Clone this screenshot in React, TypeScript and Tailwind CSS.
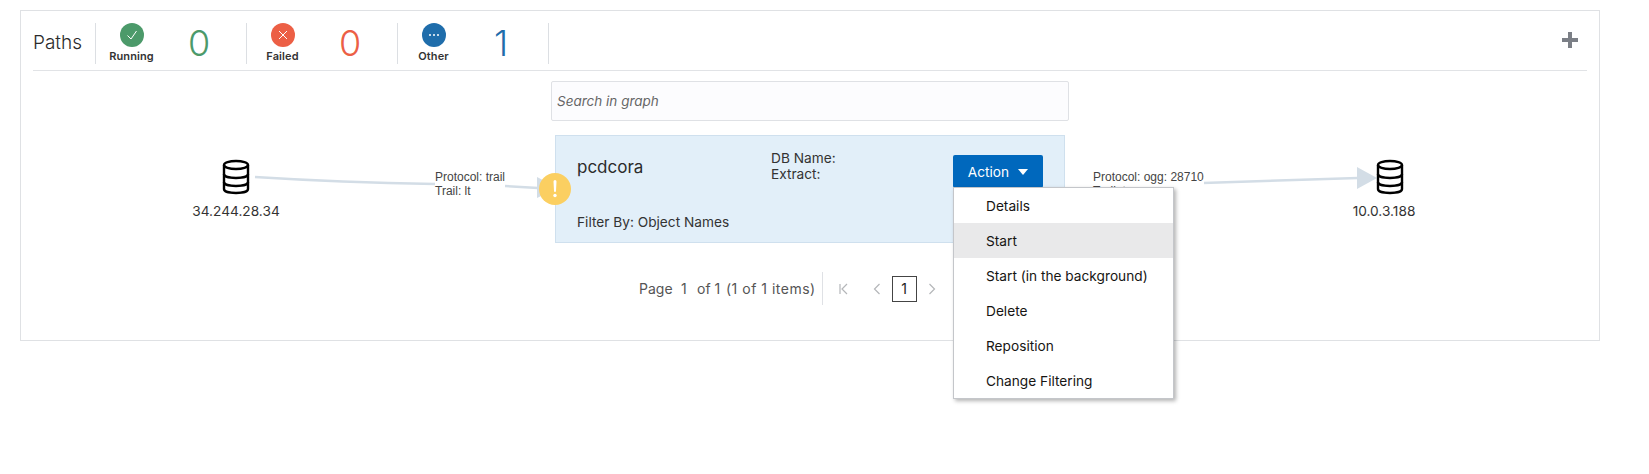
import React from "react";

const inter = "font-['Inter','Liberation_Sans',sans-serif]";

function DbIcon() {
  return (
    <svg width="28" height="36" viewBox="0 0 28 36" fill="none" stroke="#000" strokeWidth="2.4">
      <ellipse cx="14" cy="6" rx="12" ry="4" />
      <path d="M2 6v24c0 2.4 5.4 4 12 4s12-1.6 12-4V6" />
      <path d="M2 15c0 2.4 5.4 4 12 4s12-1.6 12-4" />
      <path d="M2 23c0 2.4 5.4 4 12 4s12-1.6 12-4" />
    </svg>
  );
}

function Stat({ label, value, bg, text, children }: { label: string; value: string; bg: string; text: string; children: React.ReactNode }) {
  return (
    <div className="flex w-[151px] h-[41px] border-r border-[#dcdfe3] items-start">
      <div className="w-[71px] flex flex-col items-center">
        <div className={`w-6 h-6 rounded-full flex items-center justify-center ${bg}`}>{children}</div>
        <div className="text-[11px] leading-[14px] mt-[2px] font-semibold text-[#333] tracking-[0.1px]">{label}</div>
      </div>
      <div className={`w-[64px] text-center text-[36px] leading-[40px] font-light ${text}`}>{value}</div>
    </div>
  );
}

const items = ["Details", "Start", "Start (in the background)", "Delete", "Reposition", "Change Filtering"];

export default function App() {
  return (
    <div className={`min-h-screen bg-white pt-[10px] pl-[20px] ${inter} text-[#333]`}>
      <div className="w-[1580px] h-[331px] border border-[#dfe1e4] px-[12px]">
        <header className="h-[60px] border-b border-[#e1e3e6] flex items-start pt-[12px]">
          <div className="w-[64px] h-[41px] border-r border-[#dcdfe3] flex items-center text-[19px] font-light text-[#2b2b2b] -ml-px pl-px">Paths</div>
          <Stat label="Running" value="0" bg="bg-[#4c9a6a]" text="text-[#4c9a6a]">
            <svg width="14" height="14" viewBox="0 0 14 14" fill="none" stroke="#fff" strokeWidth="1"><path d="M2.5 7.5 6 11l5.5-8" /></svg>
          </Stat>
          <Stat label="Failed" value="0" bg="bg-[#ec5f45]" text="text-[#ec5f45]">
            <svg width="12" height="12" viewBox="0 0 12 12" fill="none" stroke="#fff" strokeWidth="1"><path d="m2 2 8 8M10 2l-8 8" /></svg>
          </Stat>
          <Stat label="Other" value="1" bg="bg-[#1f6dab]" text="text-[#1f6dab]">
            <svg width="14" height="4" viewBox="0 0 14 4" fill="#fff"><circle cx="3" cy="2" r="1" /><circle cx="7" cy="2" r="1" /><circle cx="11" cy="2" r="1" /></svg>
          </Stat>
          <div className="ml-auto mr-[9px] mt-[9px]">
            <svg width="16" height="16" viewBox="0 0 16 16" fill="#7b7f86"><path d="M6 0h4v6h6v4h-6v6H6v-6H0V6h6z" /></svg>
          </div>
        </header>

        <div className="relative h-[269px]">
          <svg className="absolute left-0 top-0" width="1554" height="269" fill="none">
            <path d="M222 106 C 300 111 340 112 402 113" stroke="#d3dde6" strokeWidth="2.5" />
            <path d="M472 115 L 505 117" stroke="#d3dde6" strokeWidth="2.5" />
            <path d="M504 106 L 525 117 L 504 127 Z" fill="#d3dde6" />
            <path d="M1170 112 C 1230 110 1280 108 1325 107" stroke="#d3dde6" strokeWidth="2.5" />
            <path d="M1324 96 L 1344 107 L 1324 118 Z" fill="#d3dde6" />
          </svg>

          <div className="absolute left-[163px] top-[88px] w-[80px] flex flex-col items-center">
            <DbIcon />
            <div className="text-[13.7px] leading-[20px] mt-[6px] whitespace-nowrap">34.244.28.34</div>
          </div>
          <div className="absolute left-[1317px] top-[88px] w-[80px] flex flex-col items-center">
            <DbIcon />
            <div className="text-[13.7px] leading-[20px] mt-[6px] whitespace-nowrap -ml-[12px]">10.0.3.188</div>
          </div>

          <div className="absolute left-[402px] top-[99px] text-[12px] leading-[14px] font-['Liberation_Sans',sans-serif] text-[#444] bg-white">
            <div>Protocol: trail</div>
            <div>Trail: lt</div>
          </div>
          <div className="absolute left-[1060px] top-[99px] text-[12px] leading-[14px] font-['Liberation_Sans',sans-serif] text-[#444] bg-white">
            <div>Protocol: ogg: 28710</div>
            <div>Trail: t</div>
          </div>

          <div className="relative ml-[518px] pt-[10px] w-[518px]">
            <div className="h-[40px] border border-[#dfe1e5] rounded-[2px] bg-[#fcfcfe] flex items-center px-[5px] text-[13.5px] italic text-[#666]">
              Search in graph
            </div>
            <div className="relative mt-[14px] ml-[4px] w-[510px] h-[108px] bg-[#e2eff9] border border-[#cfe0ee] px-[21px] pt-[14px] pb-[11px] flex flex-col justify-between">
              <div className="flex items-start">
                <div className="w-[194px] text-[17px] leading-[32px] mt-[1px] text-[#2b2b2b]">pcdcora</div>
                <div className="text-[13.7px] leading-[16px] text-[#333]">
                  <div>DB Name:</div>
                  <div>Extract:</div>
                </div>
                <div className="relative ml-auto mt-[5px]">
                  <div className="w-[90px] h-[33px] pt-[1px] rounded-[2px] bg-[#0068bd] text-white text-[13.7px] flex items-center justify-center gap-[9px]">
                    Action
                    <svg width="10" height="6" viewBox="0 0 10 6" fill="#fff"><path d="M0 0h10L5 6z" /></svg>
                  </div>
                  <div className="absolute left-0 top-[32px] w-[221px] h-[212px] bg-white border border-[#c4c6ca] shadow-[2px_2px_4px_rgba(0,0,0,0.3)] z-10 text-[13.7px] text-[#161513]">
                    {items.map((it) => (
                      <div key={it} className={`h-[35px] pt-[1px] flex items-center pl-[32px] whitespace-nowrap ${it === "Start" ? "bg-[#e9e9ea]" : ""}`}>{it}</div>
                    ))}
                  </div>
                </div>
              </div>
              <div className="text-[13.7px] leading-[18px]">Filter By: Object Names</div>
              <div className="absolute -left-[17px] top-[37px] w-8 h-8 rounded-full bg-[#fbcf61] flex items-center justify-center">
                <svg width="4" height="18" viewBox="0 0 4 18" fill="#fff"><path d="M.5 1.5a1.5 1.5 0 0 1 3 0L3 11a1 1 0 0 1-2 0z" /><circle cx="2" cy="15.5" r="1.7" /></svg>
              </div>
            </div>

            <div className="flex items-center mt-[29px] ml-[88px] h-[33px] text-[14px] text-[#555]">
              <span className="w-[42px]">Page</span>
              <span className="w-[16px]">1</span>
              <span className="w-[29px]">of 1</span>
              <span className="whitespace-nowrap tracking-[0.5px]">(1 of 1 items)</span>
              <div className="w-px h-[33px] bg-[#dfe1e5] ml-[6px]" />
              <svg className="ml-[16px]" width="10" height="12" viewBox="0 0 10 12" fill="none" stroke="#b4b6b9" strokeWidth="1.2"><path d="M1 1v10M8 1 3 6l5 5" /></svg>
              <svg className="ml-[24px]" width="8" height="12" viewBox="0 0 8 12" fill="none" stroke="#b4b6b9" strokeWidth="1.2"><path d="M6.5 1 1.5 6l5 5" /></svg>
              <div className="ml-[11px] w-[25px] h-[26px] border border-[#444] flex items-center justify-center text-[#222]">1</div>
              <svg className="ml-[11px]" width="8" height="12" viewBox="0 0 8 12" fill="none" stroke="#b4b6b9" strokeWidth="1.2"><path d="m1.5 1 5 5-5 5" /></svg>
            </div>
          </div>
        </div>
      </div>
    </div>
  );
}
